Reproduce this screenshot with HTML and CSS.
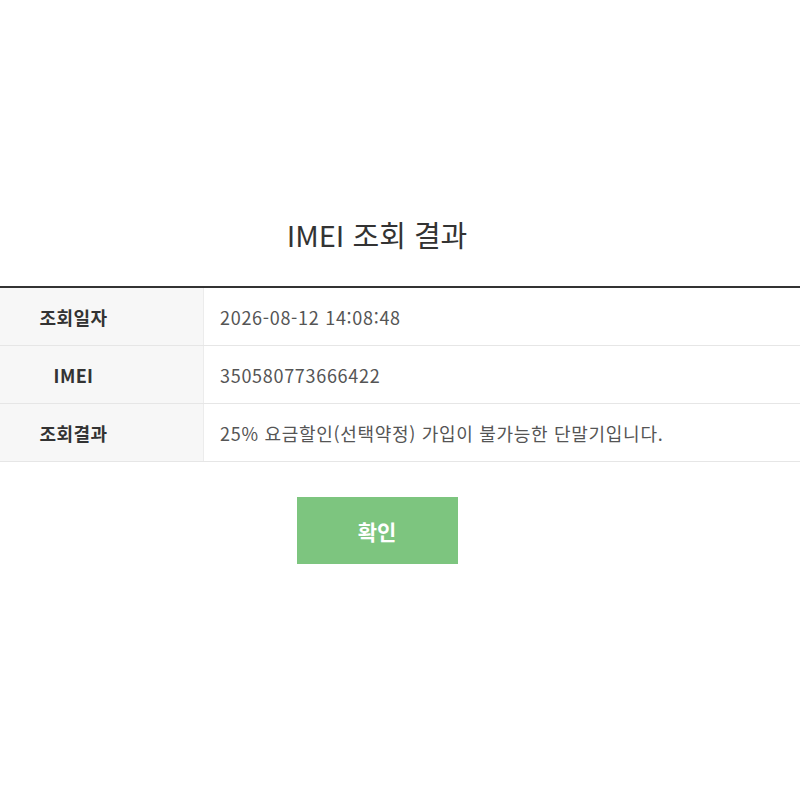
FILE: index.html
```html
<!DOCTYPE html>
<html lang="ko">
<head>
<meta charset="utf-8">
<title>IMEI 조회 결과</title>
<link rel="stylesheet" href="styles.css">
</head>
<body>
<div class="page">
  <h1 class="title">IMEI 조회 결과</h1>
  <div class="result">
    <div class="row">
      <div class="label">조회일자</div>
      <div class="value">2026-08-12 14:08:48</div>
    </div>
    <div class="row">
      <div class="label">IMEI</div>
      <div class="value">350580773666422</div>
    </div>
    <div class="row">
      <div class="label">조회결과</div>
      <div class="value">25% 요금할인(선택약정) 가입이 불가능한 단말기입니다.</div>
    </div>
  </div>
  <div class="actions">
    <button class="btn-confirm" type="button">확인</button>
  </div>
</div>
</body>
</html>
```

FILE: styles.css
```css
html, body {
  margin: 0;
  padding: 0;
  background: #fff;
}
body {
  font-family: "Noto Sans CJK KR", "Noto Sans", sans-serif;
  color: #333;
}
.page {
  padding-top: 210px;
}
.title {
  margin: 0 46px 0 0;
  font-size: 29px;
  font-weight: 400;
  line-height: 48px;
  text-align: center;
  color: #333;
}
.result {
  margin-top: 28px;
  border-top: 2px solid #333;
}
.row {
  display: flex;
  height: 57px;
  border-bottom: 1px solid #e6e6e6;
}
.label {
  width: 204px;
  flex: none;
  background: #f7f7f7;
  border-right: 1px solid #ececec;
  padding-right: 56px;
  display: flex;
  align-items: center;
  justify-content: center;
  font-size: 18px;
  font-weight: 700;
  letter-spacing: 0.4px;
  color: #333;
  box-sizing: border-box;
}
.value {
  display: flex;
  align-items: center;
  padding-left: 16px;
  font-size: 18px;
  letter-spacing: 0.7px;
  color: #555;
}
.actions {
  display: flex;
  justify-content: center;
  margin: 35px 46px 0 0;
}
.btn-confirm {
  width: 161px;
  height: 67px;
  border: 0;
  background: #7dc57f;
  color: #fff;
  font-family: inherit;
  font-size: 21px;
  font-weight: 700;
  padding: 0;
}
```
